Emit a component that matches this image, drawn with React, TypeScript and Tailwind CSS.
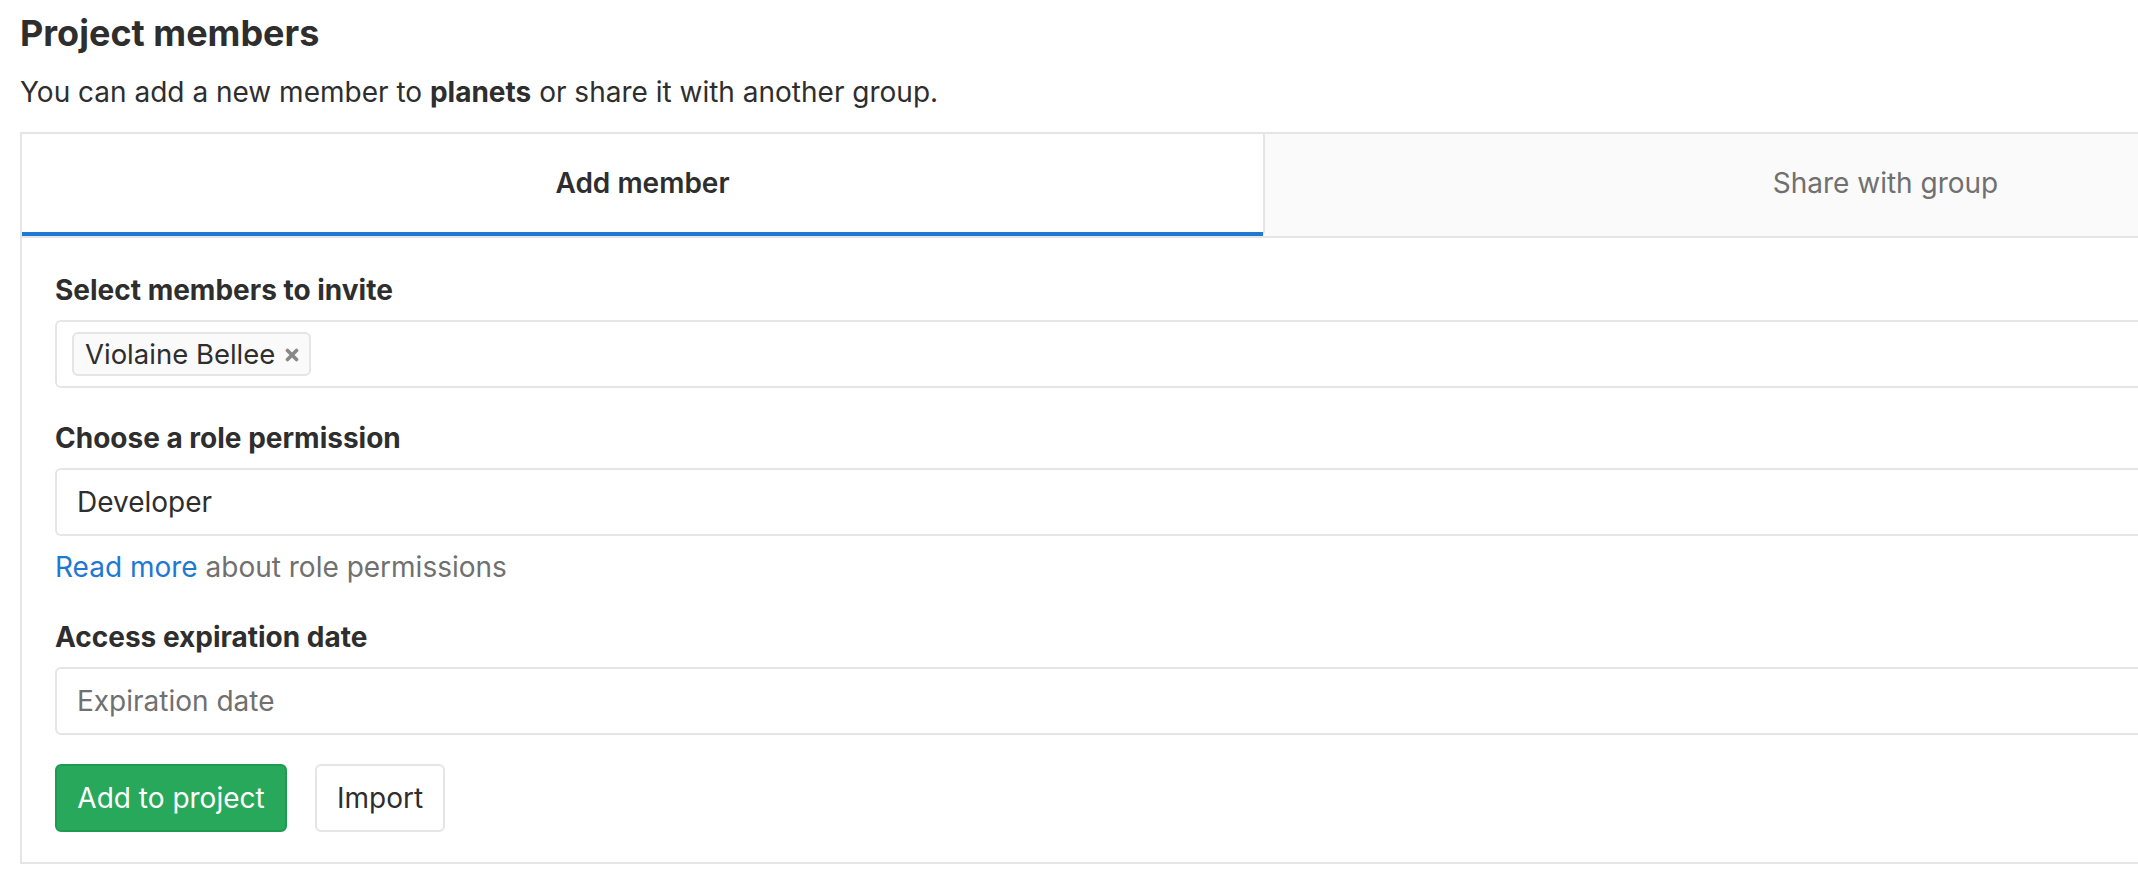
const Token = ({ name }: { name: string }) => (
  <div className="flex h-[44px] items-center gap-[10px] rounded-[6px] border-2 border-[#e5e5e5] bg-[#fafafa] pl-[11px] pr-[10px]">
    <span className="text-[27.5px] leading-[30px] text-[#2e2e2e]">{name}</span>
    <svg width="14" height="14" viewBox="0 0 14 14" className="mt-[1px]">
      <path d="M2.5 2.5 L11.5 11.5 M11.5 2.5 L2.5 11.5" stroke="#888888" strokeWidth="3.6" strokeLinecap="round" />
    </svg>
  </div>
);

const App = () => {
  return (
    <div className="h-screen w-screen overflow-hidden bg-white px-[20px] font-[Inter,sans-serif] text-[#2e2e2e]">
      <h4 className="mt-[11px] text-[36px] font-bold leading-[44px]">Project members</h4>
      <p className="mt-[17px] text-[28px] leading-[40px]">
        You can add a new member to <strong className="font-bold">planets</strong> or share it with another group.
      </p>

      <div className="mt-[20px] w-[2488px] border-2 border-[#e5e5e5]">
        {/* tabs */}
        <div className="flex border-b-2 border-[#e5e5e5]">
          <div className="flex h-[102px] flex-1 items-center justify-center border-b-4 border-[#1f78d1] text-[28px] font-semibold">
            Add member
          </div>
          <div className="flex h-[102px] flex-1 items-center justify-center border-b-4 border-l-2 border-b-transparent border-l-[#e5e5e5] bg-[#fafafa] text-[28px] text-[#707070]">
            Share with group
          </div>
        </div>

        <div className="px-[33px] pb-[30px] pt-[32px]">
          <div className="text-[28px] font-bold leading-[40px]">Select members to invite</div>
          <div className="mt-[10px] flex h-[68px] items-center rounded-[6px] border-2 border-[#e5e5e5] px-[15px]">
            <Token name="Violaine Bellee" />
          </div>

          <div className="mt-[30px] text-[28px] font-bold leading-[40px]">Choose a role permission</div>
          <div className="mt-[10px] flex h-[68px] items-center rounded-[6px] border-2 border-[#e5e5e5] px-[20px] text-[28px]">
            Developer
          </div>
          <p className="mt-[11px] text-[28px] leading-[40px] text-[#707070]">
            <a className="text-[#1f78d1]">Read more</a> about role permissions
          </p>

          <div className="mt-[30px] text-[28px] font-bold leading-[40px]">Access expiration date</div>
          <input
            className="mt-[10px] block h-[68px] w-full rounded-[6px] border-2 border-[#e5e5e5] px-[20px] text-[28px] outline-none placeholder:text-[#707070]"
            placeholder="Expiration date"
          />

          <div className="mt-[29px] flex gap-[28px]">
            <button className="h-[68px] w-[232px] rounded-[6px] border-2 border-[#1f9a51] bg-[#28a85a] text-[28px] text-white">
              Add to project
            </button>
            <button className="h-[68px] w-[130px] rounded-[6px] border-2 border-[#e5e5e5] bg-white text-[28px] text-[#2e2e2e]">
              Import
            </button>
          </div>
        </div>
      </div>
    </div>
  );
};

export default App;
